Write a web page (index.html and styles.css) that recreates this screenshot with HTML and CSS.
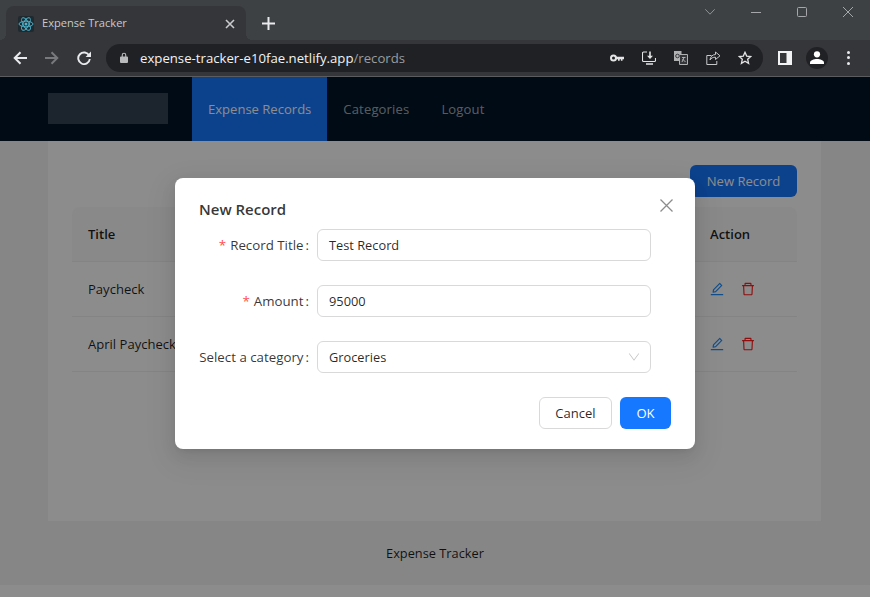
FILE: index.html
```html
<!DOCTYPE html>
<html lang="en">
<head>
<meta charset="utf-8">
<title>Expense Tracker</title>
<link rel="stylesheet" href="styles.css">
</head>
<body>
<div class="browser">
  <div class="tabstrip">
    <div class="tab">
      <span class="favicon">
        <svg width="16" height="16" viewBox="0 0 16 16" fill="none" stroke="#4fb6cf" stroke-width=".9"><circle cx="8" cy="8" r="1.5" fill="#4fb6cf" stroke="none"/><ellipse cx="8" cy="8" rx="7" ry="2.8"/><ellipse cx="8" cy="8" rx="7" ry="2.8" transform="rotate(60 8 8)"/><ellipse cx="8" cy="8" rx="7" ry="2.8" transform="rotate(120 8 8)"/></svg>
      </span>
      <span class="tab-title">Expense Tracker</span>
      <svg class="tab-close" width="10" height="10" viewBox="0 0 10 10" stroke="#c9cbcd" stroke-width="1.6"><path d="M1 1l8 8M9 1l-8 8"/></svg>
    </div>
    <svg class="new-tab" width="13" height="13" viewBox="0 0 13 13" stroke="#e8eaed" stroke-width="2"><path d="M6.5 0v13M0 6.5h13"/></svg>
    <div class="winctl">
      <svg width="10" height="6" viewBox="0 0 10 6" fill="none" stroke="#8f9296"><path d="M.3.3L5 5.2 9.7.3"/></svg>
      <svg width="10" height="10" viewBox="0 0 10 10" stroke="#a5a7aa"><path d="M0 5.5h10"/></svg>
      <svg width="10" height="10" viewBox="0 0 10 10" fill="none" stroke="#a5a7aa"><rect x=".5" y=".5" width="9" height="9" rx="1"/></svg>
      <svg width="10" height="10" viewBox="0 0 10 10" stroke="#a5a7aa"><path d="M0 0l10 10M10 0L0 10"/></svg>
    </div>
  </div>
  <div class="toolbar">
    <div class="nav-buttons">
      <svg width="14" height="14" viewBox="0 0 14 14" fill="none" stroke="#e8eaed" stroke-width="2"><path d="M14 7H2M7.5 1.2L1.7 7l5.8 5.8"/></svg>
      <svg width="14" height="14" viewBox="0 0 14 14" fill="none" stroke="#77797c" stroke-width="2"><path d="M0 7h12M6.5 1.2L12.3 7l-5.8 5.8"/></svg>
      <svg width="14" height="14" viewBox="0 0 14 14" fill="none"><path d="M12.2 4.6A5.8 5.8 0 1 0 12.8 8" stroke="#e8eaed" stroke-width="1.9"/><path d="M14 .6V6H8.6z" fill="#e8eaed"/></svg>
    </div>
    <div class="omnibox">
      <svg class="lock" width="8" height="11" viewBox="0 0 8 11"><path d="M1 4.5h.7V3a2.3 2.3 0 0 1 4.6 0v1.5H7a1 1 0 0 1 1 1V10a1 1 0 0 1-1 1H1a1 1 0 0 1-1-1V5.500a1 1 0 0 1 1-1zM2.800 4.500h2.400V3a1.200 1.200 0 0 0-2.400 0z" fill="#b8babc"/></svg>
      <span class="url"><span class="host">expense-tracker-e10fae.netlify.app</span>/records</span>
      <div class="omni-icons">
        <svg width="14" height="14" viewBox="0 0 14 14"><circle cx="3.500" cy="7" r="2.500" fill="none" stroke="#e3e4e5" stroke-width="2"/><path d="M6 5.800h8v2.400h-1.500v1.500h-1.600V8.200H9.700v1.500H8V8.200H6z" fill="#e3e4e5"/></svg>
        <svg width="14" height="14" viewBox="0 0 14 14" fill="none" stroke="#e3e4e5" stroke-width="1.100"><path d="M5 1H1.500a1 1 0 0 0-1 1v7.500a1 1 0 0 0 1 1h11a1 1 0 0 0 1-1V7"/><path d="M4 13h7" stroke-width="1.500"/><path d="M8 .5V6.500" stroke-width="1.600"/><path d="M5 4.800h6L8 8z" fill="#e3e4e5" stroke="none"/></svg>
        <svg width="14" height="14" viewBox="0 0 14 14"><path d="M0 0h7.500v10H0z" fill="#aeb0b2"/><path d="M5.500 3.500h8v10h-8z" fill="#35363a" stroke="#aeb0b2"/><circle cx="3.500" cy="5" r="1.800" fill="none" stroke="#35363a"/><path d="M8 6.500h3.500M10 6.500L8 11M8.500 8l3 3" stroke="#c8cacc" stroke-width=".8"/></svg>
        <svg class="share" width="15" height="14" viewBox="0 0 15 14" fill="none" stroke="#c6c8ca" stroke-width="1"><path d="M5.500 4.500H.8v9h10V10"/><path d="M9.500 1L14 4.800 9.500 8.500V6.200C7 6.200 5.200 7 4 9c.3-3 2.200-5.400 5.500-5.500z"/></svg>
        <svg width="14" height="14" viewBox="0 0 14 14" fill="none" stroke="#e3e4e5" stroke-width="1.300"><path d="M7 1.300l1.700 3.800 4 .4-3 2.800.9 4.100L7 10.300l-3.600 2.100.9-4.100-3-2.800 4-.4z"/></svg>
      </div>
    </div>
    <svg class="side-panel" width="14" height="14" viewBox="0 0 14 14"><path d="M0 0h14v14H0z" fill="#f1f3f4"/><path d="M2 2h6.500v10H2z" fill="#35363a"/></svg>
    <span class="profile">
      <svg width="14" height="13" viewBox="0 0 14 13" fill="#fff"><circle cx="7" cy="3.300" r="3.100"/><path d="M0 13v-1.500C0 9.200 4 8 7 8s7 1.200 7 3.500V13z"/></svg>
    </span>
    <span class="kebab"><i></i><i></i><i></i></span>
  </div>
  <div class="viewport">
    <header class="app-header">
      <div class="logo"></div>
      <nav class="menu">
        <a class="menu-item active">Expense Records</a>
        <a class="menu-item">Categories</a>
        <a class="menu-item">Logout</a>
      </nav>
    </header>
    <main class="content">
      <div class="actions"><button class="btn btn-primary">New Record</button></div>
      <div class="table">
        <div class="row head"><span class="cell-title">Title</span><span class="cell-action">Action</span></div>
        <div class="row">
          <span class="cell-title">Paycheck</span>
          <span class="cell-action icons">
            <svg class="icon edit" viewBox="64 64 896 896"><path d="M257.700 752c2 0 4-.2 6-.5L431.900 722c2-.4 3.900-1.300 5.300-2.800l423.900-423.900a9.960 9.960 0 000-14.100L694.900 114.900c-1.900-1.900-4.400-2.900-7.100-2.900s-5.200 1-7.100 2.900L256.800 538.800c-1.500 1.500-2.400 3.300-2.800 5.300l-29.500 168.200a33.500 33.500 0 009.400 29.800c6.600 6.400 14.900 9.900 23.800 9.900zm67.400-174.400L687.800 215l73.300 73.300-362.700 362.600-88.900 15.700 15.600-89zM880 836H144c-17.700 0-32 14.300-32 32v36c0 4.400 3.600 8 8 8h784c4.400 0 8-3.600 8-8v-36c0-17.700-14.300-32-32-32z"/></svg>
            <svg class="icon trash" viewBox="64 64 896 896"><path d="M360 184h-8c4.400 0 8-3.600 8-8v8h304v-8c0 4.400 3.600 8 8 8h-8v72h72v-80c0-35.300-28.700-64-64-64H352c-35.300 0-64 28.700-64 64v80h72v-72zm504 72H160c-17.700 0-32 14.300-32 32v32c0 4.400 3.600 8 8 8h60.400l24.700 523c1.600 34.100 29.800 61 63.900 61h454c34.200 0 62.300-26.800 63.900-61l24.700-523H888c4.400 0 8-3.600 8-8v-32c0-17.700-14.300-32-32-32zM731.300 840H292.700l-24.200-512h487l-24.200 512z"/></svg>
          </span>
        </div>
        <div class="row">
          <span class="cell-title">April Paycheck</span>
          <span class="cell-action icons">
            <svg class="icon edit" viewBox="64 64 896 896"><path d="M257.700 752c2 0 4-.2 6-.5L431.900 722c2-.4 3.900-1.300 5.300-2.800l423.900-423.900a9.960 9.960 0 000-14.100L694.900 114.900c-1.900-1.900-4.400-2.900-7.100-2.900s-5.200 1-7.100 2.900L256.800 538.800c-1.500 1.500-2.400 3.300-2.800 5.300l-29.500 168.200a33.500 33.500 0 009.400 29.800c6.600 6.400 14.900 9.900 23.800 9.900zm67.400-174.400L687.800 215l73.300 73.300-362.700 362.600-88.900 15.700 15.600-89zM880 836H144c-17.700 0-32 14.300-32 32v36c0 4.400 3.600 8 8 8h784c4.400 0 8-3.600 8-8v-36c0-17.700-14.300-32-32-32z"/></svg>
            <svg class="icon trash" viewBox="64 64 896 896"><path d="M360 184h-8c4.400 0 8-3.600 8-8v8h304v-8c0 4.400 3.600 8 8 8h-8v72h72v-80c0-35.300-28.700-64-64-64H352c-35.300 0-64 28.700-64 64v80h72v-72zm504 72H160c-17.700 0-32 14.300-32 32v32c0 4.400 3.600 8 8 8h60.400l24.700 523c1.600 34.100 29.800 61 63.900 61h454c34.200 0 62.300-26.800 63.900-61l24.700-523H888c4.400 0 8-3.600 8-8v-32c0-17.700-14.300-32-32-32zM731.300 840H292.700l-24.200-512h487l-24.200 512z"/></svg>
          </span>
        </div>
      </div>
    </main>
    <footer class="app-footer">Expense Tracker</footer>
    <div class="bottom-strip"></div>
    <div class="mask"></div>
    <section class="modal">
      <svg class="modal-close" width="13" height="13" viewBox="0 0 13 13" stroke="#8c8c8c" stroke-width="1.300"><path d="M.5.500l12 12M12.500.500l-12 12"/></svg>
      <h2 class="modal-title">New Record</h2>
      <form class="form">
        <label class="label"><span class="req">*</span>Record Title<span class="colon">:</span></label>
        <div class="input">Test Record</div>
        <label class="label"><span class="req">*</span>Amount<span class="colon">:</span></label>
        <div class="input">95000</div>
        <label class="label">Select a category<span class="colon">:</span></label>
        <div class="input select">Groceries
          <svg class="chevron" width="12" height="12" viewBox="64 64 896 896" fill="#bfbfbf"><path d="M884 256h-45c-5.100 0-9.900 2.500-12.900 6.600L512 694 197.900 262.600c-3-4.100-7.800-6.600-12.900-6.600h-45c-6.500 0-10.300 7.400-6.500 12.700l352.600 486.100c12.800 17.600 39 17.600 51.700 0l352.600-486.100c3.900-5.300.1-12.700-6.400-12.700z"/></svg>
        </div>
      </form>
      <div class="modal-footer">
        <button class="btn btn-default">Cancel</button>
        <button class="btn btn-ok">OK</button>
      </div>
    </section>
  </div>
</div>
</body>
</html>
```

FILE: styles.css
```css
* { box-sizing: border-box; }
html, body { margin: 0; height: 100%; overflow: hidden; }
body { font-family: "Open Sans", "Noto Sans", sans-serif; font-size: 13.05px; color: rgba(0,0,0,.88); }
.browser { width: 870px; height: 597px; display: flex; flex-direction: column; background: #3e4144; }

.tabstrip { height: 40px; display: flex; align-items: flex-start; flex: none; }
.tab { position: relative; width: 240px; height: 34px; margin: 6px 0 0 6px; padding: 0 11px 0 12px; background: #35363a; border-radius: 8px 8px 0 0; display: flex; align-items: center; color: #c8cacc; font-size: 11.1px; }
.tab::before, .tab::after { content: ""; position: absolute; bottom: 0; width: 6px; height: 6px; }
.tab::before { left: -6px; background: radial-gradient(circle at 0 0, transparent 6px, #35363a 6px); }
.tab::after { right: -6px; background: radial-gradient(circle at 100% 0, transparent 6px, #35363a 6px); }
.favicon { width: 16px; height: 16px; background: #1f2a30; border-radius: 2px; display: flex; margin-top: 1px; }
.tab-title { margin: 0 0 1px 8px; flex: 1; }
.tab-close { margin-top: 1px; }
.new-tab { margin: 17px 0 0 16px; }
.winctl { margin-left: auto; display: flex; align-items: flex-start; }
.winctl svg { margin-top: 7px; margin-right: 36px; }
.winctl svg:first-child { margin-top: 9px; }
.winctl svg:last-child { margin-right: 17px; }

.toolbar { height: 37px; flex: none; background: #35363a; border-bottom: 1px solid #5a5c5f; display: flex; align-items: center; padding-bottom: 1px; }
.nav-buttons { display: flex; gap: 18px; margin-left: 13px; }
.omnibox { width: 657px; height: 28px; margin-left: 15px; background: #202124; border-radius: 14px; display: flex; align-items: center; padding-left: 14px; }
.lock { flex: none; }
.url { margin-left: 12px; font-size: 13.2px; color: #9a9c9f; white-space: nowrap; }
.host { color: #f1f3f4; }
.omni-icons { margin-left: auto; display: flex; align-items: center; gap: 18px; margin-right: 11px; }
.share { margin-right: -1px; }
.side-panel { margin-left: 15px; }
.profile { width: 22px; height: 22px; margin-left: 14px; border-radius: 50%; background: #202124; display: flex; align-items: center; justify-content: center; }
.kebab { margin-left: 19px; display: flex; flex-direction: column; gap: 2.500px; }
.kebab i { width: 3px; height: 3px; border-radius: 50%; background: #e8eaed; }

.viewport { position: relative; flex: 1; background: #fff; display: flex; flex-direction: column; overflow: hidden; }
.app-header { height: 64px; flex: none; background: #001529; display: flex; padding-left: 48px; }
.logo { width: 120px; height: 31px; margin: 16px 24px 0 0; background: rgba(255,255,255,.2); }
.menu { display: flex; }
.menu-item { padding: 0 16px; line-height: 64px; color: rgba(255,255,255,.65); letter-spacing: .15px; }
.menu-item.active { background: #1677ff; color: #fff; letter-spacing: 0; }

.content { height: 380px; flex: none; margin: 0; padding: 24px 73px 0 72px; background: linear-gradient(to right, #f5f5f5 48px, #fff 48px, #fff 821px, #f5f5f5 821px); }
.actions { display: flex; justify-content: flex-end; margin-bottom: 10px; }
.btn { height: 32px; padding: 0 15px; border-radius: 6px; border: 1px solid transparent; font: inherit; }
.btn-primary { min-width: 107px; background: #1677ff; color: #fff; }
.table { display: flex; flex-direction: column; }
.row { height: 55px; display: flex; align-items: center; border-bottom: 1px solid #f0f0f0; }
.row.head { background: #fafafa; border-radius: 8px 8px 0 0; font-weight: 600; }
.cell-title { flex: 1; padding-left: 16px; }
.cell-action { width: 87px; }
.icons { display: flex; gap: 17px; align-items: center; }
.icon { width: 14px; height: 14px; fill: currentColor; }
.edit { color: #1f8eff; }
.trash { color: #ff1a1a; }

.app-footer { height: 64px; flex: none; background: #f5f5f5; display: flex; align-items: center; justify-content: center; font-size: 12.8px; }
.bottom-strip { flex: 1; background: #fff; }
.mask { position: absolute; inset: 0; background: rgba(0,0,0,.45); }

.modal { position: absolute; left: 175px; top: 101px; width: 520px; height: 271px; padding: 21px 24px 20px; background: #fff; border-radius: 8px; box-shadow: 0 6px 16px 0 rgba(0,0,0,.08), 0 3px 6px -4px rgba(0,0,0,.12), 0 9px 28px 8px rgba(0,0,0,.05); display: flex; flex-direction: column; }
.modal-close { position: absolute; top: 21px; right: 22px; }
.modal-title { margin: 0 0 10px; font-size: 15px; font-weight: 600; line-height: 20px; color: rgba(0,0,0,.8); }
.form { display: grid; grid-template-columns: 110px 334px; column-gap: 8px; row-gap: 24px; align-items: center; }
.label { display: flex; justify-content: flex-end; align-items: center; color: rgba(0,0,0,.8); white-space: nowrap; font-size: 13.3px; }
.req { color: #ff4d4f; margin-right: 4px; }
.colon { margin-left: 2px; }
.input { height: 32px; border: 1px solid #d9d9d9; border-radius: 6px; padding: 0 11px; display: flex; align-items: center; color: rgba(0,0,0,.85); font-size: 12.8px; }
.select { justify-content: space-between; }
.chevron { margin-right: -1px; }
.modal-footer { margin-top: auto; display: flex; justify-content: flex-end; gap: 8px; }
.btn-default { min-width: 73px; background: #fff; border-color: #d9d9d9; color: rgba(0,0,0,.85); }
.btn-ok { min-width: 51px; background: #1677ff; color: #fff; }
```
